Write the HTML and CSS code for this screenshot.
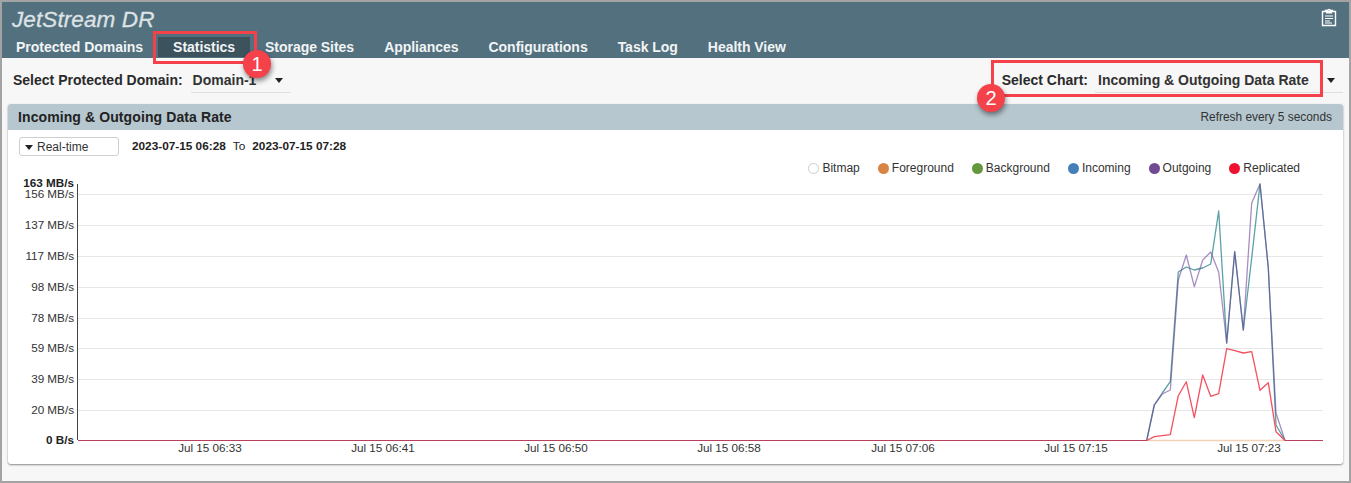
FILE: index.html
```html
<!DOCTYPE html>
<html lang="en">
<head>
<meta charset="utf-8">
<title>JetStream DR</title>
<link rel="stylesheet" href="styles.css">
</head>
<body>
<div class="frame">
  <header class="header">
    <div class="brand-row">
      <span class="logo">JetStream DR</span>
      <svg class="clip" width="18" height="19" viewBox="0 0 18 19">
        <path d="M2.5 3.5h3v-1h2a1.6 1.6 0 0 1 3 0h2v1h3v14h-13z" fill="none" stroke="#fff" stroke-width="1.4"/>
        <rect x="6" y="2.5" width="6" height="3" fill="#fff"/>
        <path d="M5 8h8M5 10.500h8M5 13h5M5 15h7" stroke="#fff" stroke-width="1.100"/>
      </svg>
    </div>
    <nav class="tabs">
      <a class="tab">Protected Domains</a>
      <a class="tab active">Statistics</a>
      <a class="tab">Storage Sites</a>
      <a class="tab">Appliances</a>
      <a class="tab">Configurations</a>
      <a class="tab">Task Log</a>
      <a class="tab">Health View</a>
    </nav>
  </header>

  <div class="selectors">
    <div class="sel-left">
      <span class="sel-label">Select Protected Domain:</span>
      <span class="select domain"><span>Domain-1</span><i class="caret"></i></span>
    </div>
    <div class="sel-right">
      <span class="sel-label">Select Chart:</span>
      <span class="select chart-sel"><span>Incoming &amp; Outgoing Data Rate</span><i class="caret"></i></span>
    </div>
  </div>

  <section class="card">
    <div class="card-head">
      <h2>Incoming &amp; Outgoing Data Rate</h2>
      <span class="refresh">Refresh every 5 seconds</span>
    </div>
    <div class="toolbar">
      <button class="range"><i class="caret small"></i>Real-time</button>
      <div class="dates"><b>2023-07-15 06:28</b><span>To</span><b>2023-07-15 07:28</b></div>
    </div>
    <ul class="legend">
      <li><i class="dot hollow"></i>Bitmap</li>
      <li><i class="dot orange"></i>Foreground</li>
      <li><i class="dot green"></i>Background</li>
      <li><i class="dot blue"></i>Incoming</li>
      <li><i class="dot purple"></i>Outgoing</li>
      <li><i class="dot red"></i>Replicated</li>
    </ul>
    <svg class="plot" width="1335" height="284" viewBox="8 175 1335 284">
      <g class="grid">
        <path d="M78 194.500H1323M78 225.500H1323M78 256.500H1323M78 287.500H1323M78 318.500H1323M78 348.500H1323M78 379.500H1323M78 410.500H1323"/>
      </g>
      <g class="ylabels">
        <text x="74" y="187" class="strong">163 MB/s</text>
        <text x="74" y="198">156 MB/s</text>
        <text x="74" y="229">137 MB/s</text>
        <text x="74" y="260">117 MB/s</text>
        <text x="74" y="291">98 MB/s</text>
        <text x="74" y="322">78 MB/s</text>
        <text x="74" y="352">59 MB/s</text>
        <text x="74" y="383">39 MB/s</text>
        <text x="74" y="414">20 MB/s</text>
        <text x="74" y="444" class="strong">0 B/s</text>
      </g>
      <g class="xlabels">
        <text x="210" y="452">Jul 15 06:33</text>
        <text x="383" y="452">Jul 15 06:41</text>
        <text x="556" y="452">Jul 15 06:50</text>
        <text x="729" y="452">Jul 15 06:58</text>
        <text x="903" y="452">Jul 15 07:06</text>
        <text x="1076" y="452">Jul 15 07:15</text>
        <text x="1249" y="452">Jul 15 07:23</text>
      </g>
      <path class="axis" d="M77.500 184V440"/>
      <path class="line fg" d="M1146 440.500H1285"/>
      <polyline class="line incoming" points="1146.700,440.500 1154.300,405 1162.300,393 1170.300,381.700 1178.300,272 1186.300,267 1194.300,270 1202.700,268 1210.700,264 1218.700,211 1226.700,343 1234.700,251.700 1243.300,330 1251.700,258 1260,184 1268.300,268 1276,425 1285,440.500"/>
      <polyline class="line outgoing" points="1146.700,440.500 1154.300,405 1162.300,394 1170.300,390 1178.300,280 1186.300,255 1194.300,286.700 1202.700,260 1210.700,252 1218.700,272 1226.700,343 1234.700,251.700 1243.300,330 1251.700,203 1260,184 1268.300,268 1276,413 1285,440.500"/>
      <polyline class="line replicated" points="1146.700,440.500 1154.300,436.700 1162.300,435.700 1170.300,434.700 1178.300,395.700 1186.300,381.700 1194.300,417.700 1202.700,375 1210.700,396.300 1218.700,393.700 1226.700,348.700 1234.700,350.700 1243.300,353 1251.700,351.700 1260,390.300 1268.300,382.700 1276,431.700 1285,440.500"/>
      <path class="base" d="M78 440.500H1146.700M1285 440.500H1323"/>
    </svg>
  </section>
</div>

<div class="mark mark-one"></div>
<div class="mark mark-two"></div>
<div class="badge badge-one">1</div>
<div class="badge badge-two">2</div>
</body>
</html>
```

FILE: styles.css
```css
* { box-sizing: border-box; }
html, body { margin: 0; padding: 0; }
body {
  width: 1351px;
  height: 483px;
  overflow: hidden;
  font-family: "Liberation Sans", Arial, sans-serif;
  color: #222;
  background: #fff;
}
.frame {
  width: 1351px;
  height: 483px;
  border: 2px solid #a3a3a3;
  background: #f7f7f7;
}
.header {
  height: 56px;
  background: #53707e;
  display: flex;
  flex-direction: column;
}
.brand-row {
  height: 35px;
  display: flex;
  justify-content: space-between;
  padding: 5px 11px 0 10px;
}
.logo {
  font-size: 22.5px;
  line-height: 26px;
  font-style: italic;
  color: #dde3e6;
  -webkit-text-stroke: 0.3px #dde3e6;
  letter-spacing: 0.1px;
}
.clip { margin-top: 1px; }
.tabs {
  display: flex;
  padding-left: 0;
}
.tab {
  height: 20px;
  padding: 0 15px;
  font-size: 14px;
  font-weight: bold;
  line-height: 20px;
  letter-spacing: -0.03px;
  color: #f1f4f5;
}
.tab:first-child { padding-left: 14px; }
.tab.active { background: #3c525d; }
.selectors {
  height: 46px;
  display: flex;
  justify-content: space-between;
  padding: 10px 6px 0 11px;
}
.sel-left, .sel-right { display: flex; align-items: flex-start; }
.sel-label {
  font-size: 14px;
  font-weight: bold;
  line-height: 24px;
  color: #2a2a2a;
}
.select {
  height: 25px;
  display: flex;
  justify-content: space-between;
  align-items: center;
  font-size: 14px;
  line-height: 24px;
  font-weight: bold;
  color: #333;
  border-bottom: 1px solid #dedede;
}
.domain { width: 100px; margin-left: 8px; padding: 0 8px 0 2px; }
.chart-sel { width: 248px; margin-left: 7px; padding: 0 8px 0 3px; }
.caret {
  width: 0;
  height: 0;
  border-left: 4.5px solid transparent;
  border-right: 4.5px solid transparent;
  border-top: 5px solid #222;
}
.caret.small {
  display: inline-block;
  border-left-width: 4px;
  border-right-width: 4px;
  border-top-width: 5px;
  margin-right: 4px;
  vertical-align: 1px;
}
.card {
  width: 1335px;
  height: 360px;
  margin-left: 6px;
  background: #fff;
  border-radius: 3px;
  box-shadow: 0 1px 2px rgba(0, 0, 0, 0.45);
  position: relative;
}
.card-head {
  height: 26px;
  background: #b6c7cf;
  border-radius: 3px 3px 0 0;
  display: flex;
  justify-content: space-between;
  align-items: center;
  padding: 0 11px 0 10px;
}
.card-head h2 {
  margin: 0;
  font-size: 14px;
  font-weight: bold;
  letter-spacing: 0.1px;
  color: #222;
}
.refresh { font-size: 11.9px; color: #333; }
.toolbar {
  height: 26px;
  display: flex;
  padding: 7px 0 0 11px;
}
.range {
  width: 100px;
  height: 19px;
  margin: 0;
  padding: 2px 0 0 5px;
  text-align: left;
  border: 1px solid #cfcfcf;
  border-radius: 3px;
  background: #fff;
  font: 12px/15px "Liberation Sans", Arial, sans-serif;
  color: #333;
}
.dates {
  display: flex;
  gap: 7px;
  margin-left: 13px;
  font-size: 11.8px;
  line-height: 18px;
  color: #222;
}
.legend {
  list-style: none;
  margin: 0;
  padding: 5px 43px 0 0;
  height: 19px;
  display: flex;
  justify-content: flex-end;
  gap: 18px;
  font-size: 12px;
  line-height: 14px;
  color: #333;
}
.legend li { display: flex; align-items: center; gap: 3px; }
.dot { width: 11px; height: 11px; border-radius: 50%; }
.hollow { background: #fff; border: 1px solid #ccc; }
.orange { background: #d98445; }
.green { background: #63983f; }
.blue { background: #457fb8; }
.purple { background: #714a94; }
.red { background: #ee1230; }
.plot { display: block; }
.grid path { fill: none; stroke: #e6e6e6; stroke-width: 1; }
.axis { fill: none; stroke: #444; stroke-width: 1; }
.ylabels text {
  font-size: 11.7px;
  text-anchor: end;
  fill: #333;
}
.ylabels .strong { font-weight: bold; fill: #222; }
.xlabels text {
  font-size: 11.7px;
  text-anchor: middle;
  fill: #333;
}
.line { fill: none; stroke-width: 1.300; stroke-linejoin: round; }
.fg { stroke: #f3d3b8; }
.incoming { stroke: #5aa0a5; }
.outgoing { stroke: #6b4596; stroke-opacity: 0.6; }
.replicated { stroke: #f4505f; }
.base { fill: none; stroke: #b8405c; stroke-width: 1; }
.mark {
  position: absolute;
  border: 3px solid #f5414a;
}
.mark-one { left: 153px; top: 31px; width: 104px; height: 33px; }
.mark-two { left: 991px; top: 60px; width: 332px; height: 37px; }
.badge {
  position: absolute;
  width: 28px;
  height: 28px;
  border-radius: 50%;
  background: #f5414a;
  color: #fff;
  font-size: 20px;
  line-height: 28px;
  text-align: center;
  box-shadow: 1px 3px 5px rgba(0, 0, 0, 0.45);
}
.badge-one { left: 243px; top: 50px; }
.badge-two { left: 977px; top: 84px; }
```
